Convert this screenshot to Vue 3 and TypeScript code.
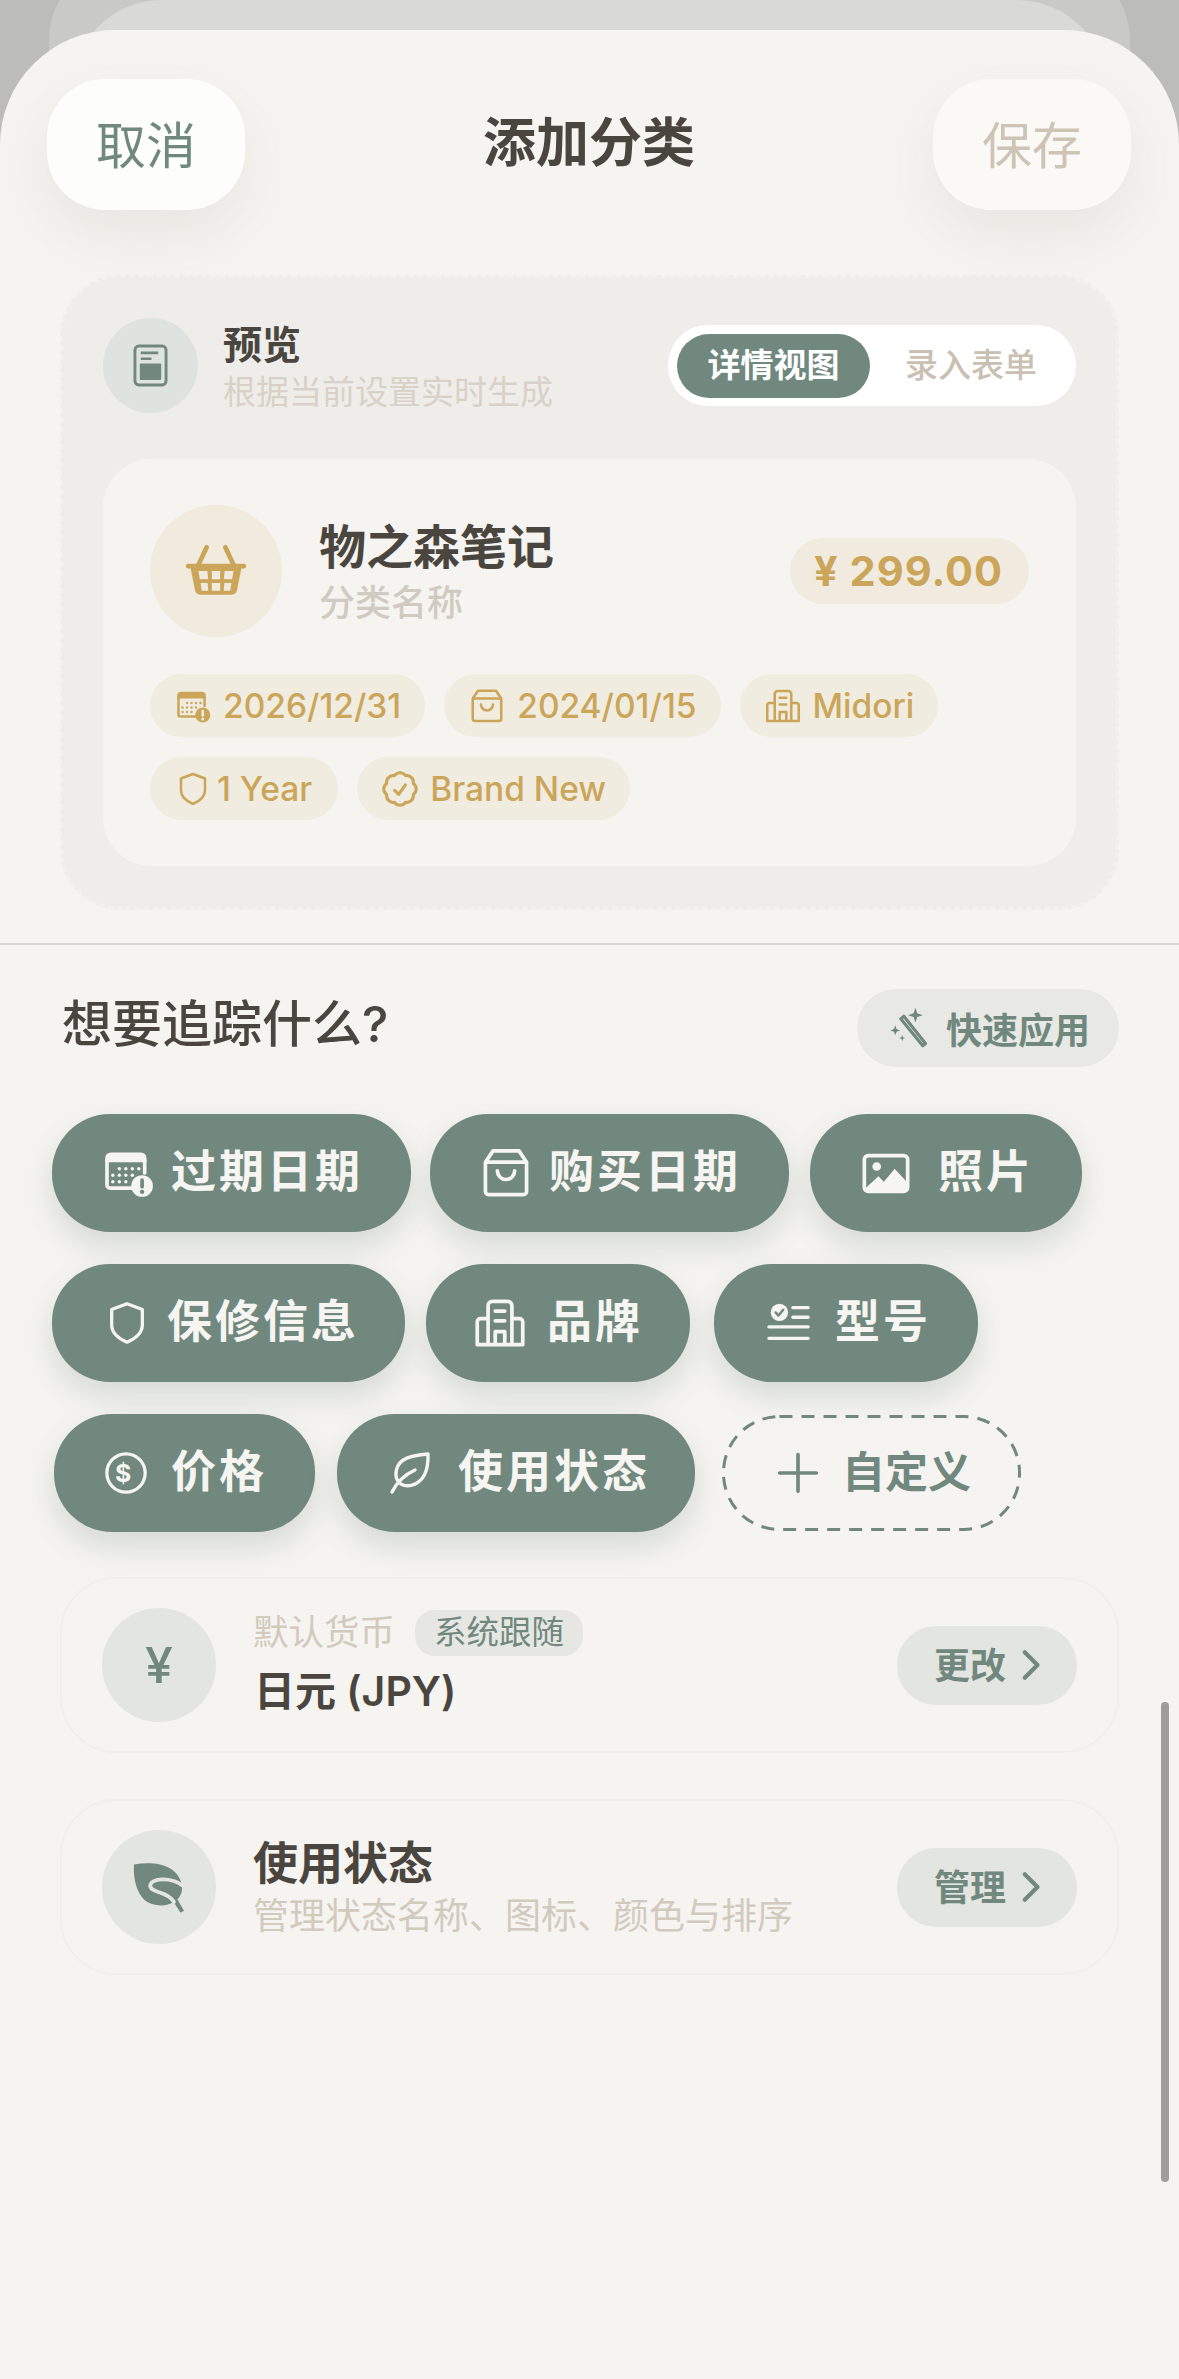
<template>
  <div class="page">
    <div class="back back-a"></div>
    <div class="back back-b"></div>

    <div class="sheet">
      <header class="nav">
        <button class="nav-btn cancel">取消</button>
        <h1 class="nav-title">添加分类</h1>
        <button class="nav-btn save">保存</button>
      </header>

      <section class="preview">
        <div class="preview-head">
          <span class="preview-icon"><svg viewBox="0 0 36 44" v-html="icons.doc"></svg></span>
          <div class="preview-copy">
            <div class="preview-title">预览</div>
            <div class="preview-sub">根据当前设置实时生成</div>
          </div>
          <div class="segment">
            <span class="seg active">详情视图</span>
            <span class="seg">录入表单</span>
          </div>
        </div>

        <div class="item-card">
          <div class="item-top">
            <span class="item-icon"><svg viewBox="0 0 60 52" v-html="icons.basket"></svg></span>
            <div class="item-copy">
              <div class="item-name">物之森笔记</div>
              <div class="item-sub">分类名称</div>
            </div>
            <span class="price">¥ 299.00</span>
          </div>
          <div class="tags">
            <span v-for="t in tags" :key="t.label" class="tag">
              <svg viewBox="0 0 24 24" v-html="icons[t.icon]"></svg>
              {{ t.label }}
            </span>
          </div>
        </div>
      </section>

      <div class="divider"></div>

      <div class="track-head">
        <h2 class="track-title">想要追踪什么?</h2>
        <button class="quick">
          <svg viewBox="0 0 24 24" v-html="icons.wand"></svg>
          快速应用
        </button>
      </div>

      <div class="chips">
        <div v-for="(row, i) in chipRows" :key="i" :class="['chip-row', 'row-' + i]">
          <button v-for="c in row" :key="c.label" :class="['chip', c.key]">
            <svg v-if="c.key === 'custom'" class="dash" viewBox="0 0 299 116">
              <rect x="1.5" y="1.5" width="296" height="113" rx="56" fill="none" stroke="#70887e" stroke-width="3" stroke-dasharray="13 9" />
            </svg>
            <svg class="glyph" viewBox="0 0 24 24" v-html="icons[c.icon]"></svg>
            <span>{{ c.label }}</span>
          </button>
        </div>
      </div>

      <div class="setting first">
        <span class="setting-icon yen">¥</span>
        <div class="setting-copy">
          <div class="setting-line">
            <span class="setting-label">默认货币</span>
            <span class="badge">系统跟随</span>
          </div>
          <div class="setting-value">日元 (JPY)</div>
        </div>
        <button class="setting-btn">更改<svg viewBox="0 0 24 24" v-html="icons.chevron"></svg></button>
      </div>

      <div class="setting">
        <span class="setting-icon"><svg viewBox="0 0 24 24" v-html="icons.leafSolid"></svg></span>
        <div class="setting-copy">
          <div class="setting-name">使用状态</div>
          <div class="setting-sub">管理状态名称、图标、颜色与排序</div>
        </div>
        <button class="setting-btn">管理<svg viewBox="0 0 24 24" v-html="icons.chevron"></svg></button>
      </div>
    </div>

    <div class="scrollbar"></div>
  </div>
</template>

<script setup lang="ts">
interface Tag {
  icon: string
  label: string
}

interface Chip extends Tag {
  key: string
}

const line = 'fill="none" stroke="currentColor" stroke-width="1.7" stroke-linecap="round" stroke-linejoin="round"'

const icons: Record<string, string> = {
  calendar: `<path d="M1.5 5A2.5 2.5 0 0 1 4 2.5h14A2.5 2.5 0 0 1 20.5 5v2h-19z" fill="currentColor"/>
    <path d="M2.3 6v11.500A1.500 1.500 0 0 0 3.800 19h10M19.700 6v6" ${line}/>
    <g fill="currentColor"><circle cx="8" cy="10" r=".8"/><circle cx="11" cy="10" r=".8"/><circle cx="14" cy="10" r=".8"/><circle cx="17" cy="10" r=".8"/><circle cx="5" cy="13" r=".8"/><circle cx="8" cy="13" r=".8"/><circle cx="11" cy="13" r=".8"/><circle cx="14" cy="13" r=".8"/><circle cx="5" cy="16" r=".8"/><circle cx="8" cy="16" r=".8"/><circle cx="11" cy="16" r=".8"/></g>
    <circle cx="18.500" cy="18" r="5" fill="currentColor"/>
    <path d="M18.500 15.300v3" stroke="var(--knock)" stroke-width="1.700" stroke-linecap="round"/><circle cx="18.500" cy="20.700" r="1" fill="var(--knock)"/>`,
  bag: `<path d="M6 1.800h12L21.500 7v13.500A1.500 1.500 0 0 1 20 22H4a1.500 1.500 0 0 1-1.500-1.500V7zM2.500 7h19" ${line}/><path d="M8 11a4 4 0 0 0 8 0" ${line}/>`,
  building: `<path d="M1.500 22V11.500A1.500 1.500 0 0 1 3 10h3.500V4a2 2 0 0 1 2-2h7a2 2 0 0 1 2 2v6H21a1.500 1.500 0 0 1 1.500 1.500V22zM6.500 10v12M17.500 10v12M9.800 6.500h4.400M9.800 11h4.400M9.800 22v-6h4.400v6" ${line}/>`,
  shield: `<path d="M12 2 20 5v8c0 4.200-3.500 7-8 9-4.500-2-8-4.800-8-9V5z" ${line}/>`,
  badge: `<g transform="translate(-2.400 -2.400) scale(1.200)"><path d="M9 12.750 11.250 15 15 9.750M21 12c0 1.268-.63 2.390-1.593 3.068a3.745 3.745 0 0 1-1.043 3.296 3.745 3.745 0 0 1-3.296 1.043A3.745 3.745 0 0 1 12 21c-1.268 0-2.390-.63-3.068-1.593a3.746 3.746 0 0 1-3.296-1.043 3.746 3.746 0 0 1-1.043-3.296A3.745 3.745 0 0 1 3 12c0-1.268.63-2.390 1.593-3.068a3.745 3.745 0 0 1 1.043-3.296 3.746 3.746 0 0 1 3.296-1.043A3.746 3.746 0 0 1 12 3c1.268 0 2.390.63 3.068 1.593a3.746 3.746 0 0 1 3.296 1.043 3.746 3.746 0 0 1 1.043 3.296A3.745 3.745 0 0 1 21 12Z" ${line} stroke-width="1.200"/></g>`,
  photo: `<rect x="2" y="4" width="20" height="16.500" rx="1.800" ${line}/><circle cx="7.700" cy="9" r="2" fill="currentColor"/><path d="M2.500 19v1h19v-4l-5.500-6-5 6-2.500-2.500z" fill="currentColor"/>`,
  model: `<circle cx="7" cy="6.500" r="4.500" fill="currentColor"/><path d="M5 6.500l1.500 1.600 2.500-3" fill="none" stroke="var(--knock)" stroke-width="1.300" stroke-linecap="round" stroke-linejoin="round"/><path d="M14 4h8M14 9h8M1.500 14h20.500M1.500 20h20.500" ${line}/>`,
  dollar: `<circle cx="12" cy="12" r="10" ${line}/><text x="12" y="16.800" text-anchor="middle" font-size="13" font-family="Inter, sans-serif" fill="currentColor">$</text>`,
  leaf: `<path d="M21 2.500c-8.500.800-14.500 2-15.800 8-.8 3.500.5 6.500 3.300 7.500 3.700 1.300 8.500-.7 10.800-5.200 1.500-3 1.800-6.800 1.700-10.300zM3 21.500c2.500-5 6-8.500 11.500-11" ${line}/>`,
  plus: `<path d="M12 2v20M2 12h20" fill="none" stroke="currentColor" stroke-width="2" stroke-linecap="round"/>`,
  wand: `<path d="M7.500 7 9.200 5.600 21 20.500l-1.500 1.200z" ${line} stroke-width="1.100"/><path d="M15.500 1l1 3 3 1-3 1-1 3-1-3-3-1 3-1zM4.500 10.500l.7 2.100 2 .7-2 .7-.7 2-.7-2-2-.7 2-.7zM8.300 15.800l.4 1.300 1.300.4-1.300.4-.4 1.300-.4-1.300-1.300-.4 1.300-.4z" fill="currentColor"/>`,
  chevron: `<path d="M8.500 3.500 17 12l-8.500 8.500" fill="none" stroke="currentColor" stroke-width="2.800" stroke-linecap="round" stroke-linejoin="round"/>`,
  leafSolid: `<path d="M2 3c8-1.500 17 0 19 7.500.7 2.700-.2 5-1.600 6.500l2.600 4.500-1.400.8-2.700-4.300c-2.200 1.400-5.600 1.800-8.700.8C3.500 17.200 1.500 9 2 3z" fill="currentColor"/><path d="M21.500 11.500C17 8 8.500 8.300 8.500 11.500c0 3 7 2 9.500 6.500" fill="none" stroke="#e3e5e0" stroke-width="1.500" stroke-linecap="round"/>`,
  doc: `<rect x="2" y="2" width="32" height="40" rx="4" fill="none" stroke="currentColor" stroke-width="3"/><path d="M8 9h18M8 15h11" stroke="currentColor" stroke-width="2.600"/><rect x="7" y="20" width="22" height="17" rx="1" fill="currentColor"/>`,
  basket: `<path d="M21 3 13 20M39 3l8 17" fill="none" stroke="currentColor" stroke-width="4.500" stroke-linecap="round"/>
    <path fill-rule="evenodd" fill="currentColor" d="M3 19h54a2 2 0 0 1 0 4.500h-2.500L50.500 44a6 6 0 0 1-6 5h-29a6 6 0 0 1-6-5L5.500 23.500H3A2 2 0 0 1 3 19zM13 26l1.400 8h8l-.7-8zM26 26v8h8v-8zM38.300 26l-.7 8h8L47 26zM15 37.500l1.300 7.500h6.200l-.6-7.500zM26 37.500V45h8v-7.500zM38 37.500 37.500 45h6.200l1.300-7.500z"/>`
}

const tags: Tag[] = [
  { icon: 'calendar', label: '2026/12/31' },
  { icon: 'bag', label: '2024/01/15' },
  { icon: 'building', label: 'Midori' },
  { icon: 'shield', label: '1 Year' },
  { icon: 'badge', label: 'Brand New' }
]

const chipRows: Chip[][] = [
  [
    { key: 'expiry', icon: 'calendar', label: '过期日期' },
    { key: 'bought', icon: 'bag', label: '购买日期' },
    { key: 'photo', icon: 'photo', label: '照片' }
  ],
  [
    { key: 'warranty', icon: 'shield', label: '保修信息' },
    { key: 'brand', icon: 'building', label: '品牌' },
    { key: 'model', icon: 'model', label: '型号' }
  ],
  [
    { key: 'cost', icon: 'dollar', label: '价格' },
    { key: 'status', icon: 'leaf', label: '使用状态' },
    { key: 'custom', icon: 'plus', label: '自定义' }
  ]
]
</script>

<style scoped>
.page {
  position: relative;
  height: 2379px;
  overflow: hidden;
  background: #bcbcb8;
  font-family: Inter, "Noto Sans CJK SC", sans-serif;
  color: #4a463f;
}

.back {
  position: absolute;
}

.back-a {
  left: 49px;
  right: 49px;
  top: -40px;
  height: 200px;
  border-radius: 80px;
  background: #c9c9c5;
}

.back-b {
  left: 72px;
  right: 72px;
  top: 0;
  height: 200px;
  border-radius: 90px 90px 0 0;
  background: #d9d9d5;
}

.sheet {
  position: absolute;
  left: 0;
  right: 0;
  top: 30px;
  bottom: 0;
  border-radius: 115px 115px 0 0;
  background: #f5f4f0;
}

button {
  border: none;
  font-family: inherit;
  padding: 0;
}

svg {
  flex: none;
  display: block;
}

.nav {
  display: flex;
  align-items: center;
  justify-content: space-between;
  padding: 49px 48px 0 47px;
}

.nav-btn {
  width: 198px;
  height: 131px;
  padding-bottom: 5px;
  border-radius: 58px;
  font-size: 50px;
  background: #fdfdfb;
  color: #70887e;
  box-shadow: 0 24px 60px rgba(90, 90, 80, 0.09);
}

.nav-btn.save {
  background: #faf9f6;
  color: #cdc4b6;
}

.nav-title {
  margin: -2px 0 0;
  font-size: 53px;
  font-weight: 700;
  line-height: 1;
}

.preview {
  margin: 65px 60px 0;
  padding: 40px 40px 41px;
  border: 3px dashed #f2f1ed;
  border-radius: 60px;
  background: #eeede9;
}

.preview-head {
  display: flex;
  align-items: center;
}

.preview-icon {
  width: 95px;
  height: 95px;
  border-radius: 50%;
  background: #dfe3df;
  color: #70887e;
  display: flex;
  align-items: center;
  justify-content: center;
}

.preview-icon svg {
  width: 35px;
  height: 43px;
}

.preview-copy {
  margin-left: 25px;
  height: 92px;
  padding-top: 3px;
  flex: 1;
}

.preview-title {
  font-size: 39px;
  font-weight: 700;
  line-height: 48px;
}

.preview-sub {
  font-size: 33px;
  line-height: 46px;
  color: #d9d1c7;
}

.segment {
  display: flex;
  align-items: center;
  width: 408px;
  height: 81px;
  box-sizing: border-box;
  padding: 0 9px;
  border-radius: 40px;
  background: #fff;
}

.seg {
  width: 193px;
  height: 64px;
  border-radius: 32px;
  font-size: 33px;
  font-weight: 500;
  text-align: center;
  line-height: 62px;
  color: #c9c0b2;
}

.seg.active {
  background: #70887e;
  color: #fff;
  font-weight: 700;
}

.seg + .seg {
  flex: 1;
  padding-left: 5px;
}

.item-card {
  margin-top: 46px;
  height: 407px;
  box-sizing: border-box;
  padding: 46px 47px 0;
  border-radius: 48px;
  background: #f5f4f0;
}

.item-top {
  display: flex;
  align-items: center;
}

.item-icon {
  width: 132px;
  height: 132px;
  border-radius: 50%;
  background: #f0ebdc;
  color: #cba55a;
  display: flex;
  align-items: center;
  justify-content: center;
}

.item-icon svg {
  width: 62px;
  height: 54px;
}

.item-copy {
  margin-left: 37px;
  padding-top: 3px;
  flex: 1;
}

.item-name {
  font-size: 47px;
  font-weight: 700;
  line-height: 58px;
}

.item-sub {
  margin-top: 2px;
  font-size: 36px;
  line-height: 50px;
  font-weight: 500;
  color: #d0cac0;
}

.price {
  height: 66px;
  line-height: 66px;
  padding: 0 26px 0 24px;
  border-radius: 33px;
  background: #f1ebdf;
  color: #cba55a;
  font-size: 41.5px;
  font-weight: 700;
  letter-spacing: 1px;
}

.tags {
  --knock: #f0ecdf;
  display: flex;
  flex-wrap: wrap;
  gap: 20px 19px;
  margin-top: 37px;
}

.tag {
  display: flex;
  align-items: center;
  gap: 12px;
  height: 63px;
  padding: 0 24px 0 25px;
  border-radius: 32px;
  background: #f0ecdf;
  color: #cba55a;
  font-size: 33.5px;
  font-weight: 500;
}

.tag:nth-child(4) {
  gap: 6px;
  padding-right: 26px;
}

.tag svg {
  width: 36px;
  height: 36px;
}

.divider {
  height: 2px;
  margin-top: 33px;
  background: #d7d6d2;
}

.track-head {
  display: flex;
  align-items: center;
  justify-content: space-between;
  margin-top: 44px;
  padding: 0 60px 0 62px;
}

.track-title {
  margin: 0 0 8px;
  font-size: 50px;
  font-weight: 500;
  line-height: 1;
}

.quick {
  display: flex;
  align-items: center;
  gap: 15px;
  width: 262px;
  height: 78px;
  box-sizing: border-box;
  padding-left: 30px;
  border-radius: 39px;
  background: #e8e9e5;
  color: #70887e;
  font-size: 36px;
  font-weight: 700;
}

.quick svg {
  width: 44px;
  height: 44px;
}

.chips {
  margin-top: 47px;
  padding-left: 52px;
  display: flex;
  flex-direction: column;
  gap: 32px;
}

.chip-row {
  display: flex;
  gap: 20px;
}

.row-2 {
  padding-left: 2px;
  gap: 22px;
}

.chip {
  --knock: #70887e;
  --icon: 46px;
  position: relative;
  display: flex;
  align-items: center;
  height: 118px;
  border-radius: 58px;
  background: #70887e;
  color: #f6f5f1;
  font-size: 45px;
  font-weight: 700;
  letter-spacing: 3px;
  box-shadow: 0 14px 30px rgba(80, 100, 90, 0.18);
}

.chip span {
  padding-bottom: 9px;
}

.chip .glyph {
  width: var(--icon);
  height: var(--icon);
}

.expiry { padding: 0 48px 0 50px; gap: 17px; --icon: 52px; }
.bought { padding: 0 48px 0 50px; gap: 17px; --icon: 52px; margin-left: -1px; }
.photo { padding: 0 48px 0 50px; gap: 26px; --icon: 52px; margin-left: 1px; }
.warranty { padding: 0 46px 0 52px; gap: 17px; }
.brand { padding: 0 47px 0 48px; gap: 21px; --icon: 52px; margin-left: 1px; }
.model { padding: 0 47px 0 52px; gap: 23px; margin-left: 4px; }
.cost { padding: 0 48px 0 49px; gap: 22px; }
.status { padding: 0 45px 0 49px; gap: 24px; --icon: 48px; }

.chip.custom {
  width: 299px;
  height: 116px;
  box-sizing: border-box;
  margin: 1px 0 0 5px;
  padding-left: 54px;
  gap: 22px;
  --icon: 44px;
  background: transparent;
  color: #70887e;
  font-size: 43px;
  letter-spacing: 0;
  box-shadow: none;
}

.dash {
  position: absolute;
  left: 0;
  top: 0;
  width: 299px;
  height: 116px;
}

.setting {
  display: flex;
  align-items: center;
  height: 176px;
  box-sizing: border-box;
  margin: 46px 60px 0;
  padding: 0 40px;
  border: 2px solid #f0efeb;
  border-radius: 56px;
  background: #f5f4f0;
}

.setting.first {
  margin-top: 45px;
}

.setting-icon {
  width: 114px;
  height: 114px;
  flex: none;
  border-radius: 50%;
  background: #e3e5e0;
  color: #70887e;
  display: flex;
  align-items: center;
  justify-content: center;
}

.setting-icon svg {
  width: 60px;
  height: 60px;
}

.yen {
  font-size: 50px;
  font-weight: 500;
}

.setting-copy {
  margin-left: 37px;
  flex: 1;
}

.setting-line {
  display: flex;
  align-items: center;
  gap: 20px;
}

.setting-label {
  font-size: 35.5px;
  line-height: 46px;
  color: #d2cabc;
}

.badge {
  height: 46px;
  line-height: 46px;
  padding: 0 19px;
  border-radius: 20px;
  background: #e6e7e2;
  color: #70887e;
  font-size: 32.5px;
}

.setting-value {
  margin: 6px 0 0 1px;
  font-size: 41px;
  font-weight: 600;
  line-height: 58px;
}

.setting-name {
  font-size: 45px;
  font-weight: 700;
  line-height: 58px;
}

.setting-sub {
  font-size: 36px;
  line-height: 46px;
  color: #d2cabc;
}

.setting-btn {
  display: flex;
  align-items: center;
  gap: 6px;
  width: 180px;
  height: 79px;
  box-sizing: border-box;
  padding: 0 0 4px 37px;
  border-radius: 39px;
  background: #e3e5e0;
  color: #70887e;
  font-size: 36px;
  font-weight: 700;
}

.setting-btn svg {
  width: 36px;
  height: 36px;
  margin-top: 4px;
}

.scrollbar {
  position: absolute;
  left: 1161px;
  top: 1702px;
  width: 8px;
  height: 480px;
  border-radius: 4px;
  background: #9d9d99;
}
</style>

<style>
html,
body {
  margin: 0;
  background: #f5f4f0;
}
</style>
